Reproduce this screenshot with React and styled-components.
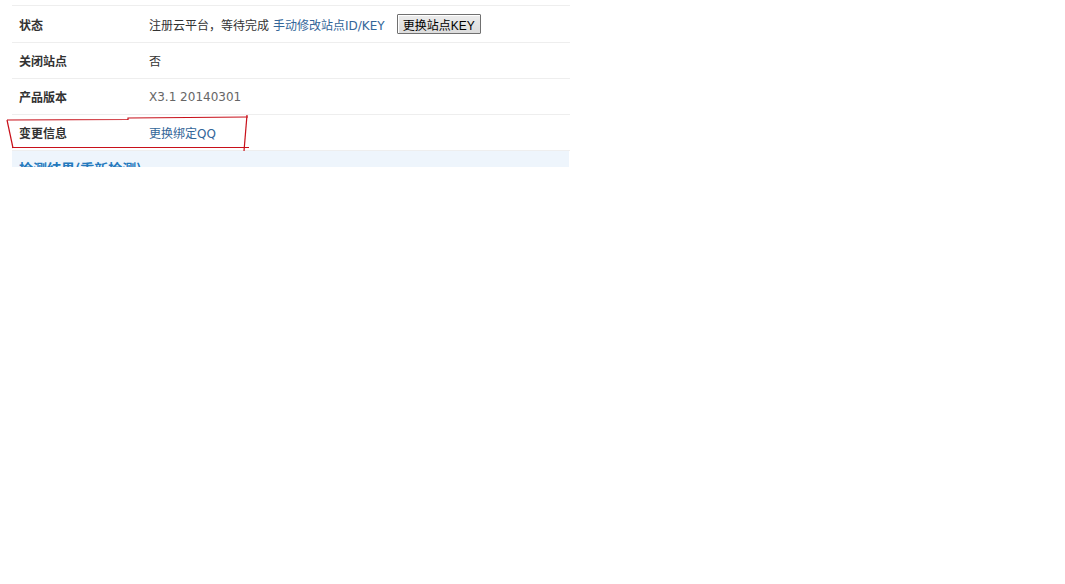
import React from "react";
import styled, { createGlobalStyle } from "styled-components";

const GlobalStyle = createGlobalStyle`
  html, body {
    margin: 0;
    padding: 0;
    background: #fff;
  }
  body {
    font-family: "DejaVu Sans", "Noto Sans CJK SC", sans-serif;
    font-size: 12px;
    color: #333;
  }
`;

const Viewport = styled.div`
  position: relative;
  height: 167px;
  overflow: hidden;
  padding: 5px 0 0 12px;
  box-sizing: border-box;
`;

const Table = styled.div`
  width: 558px;
  border-top: 1px solid #eeeeee;
`;

const Row = styled.div`
  display: grid;
  grid-template-columns: 130px 1fr;
  align-items: center;
  height: ${(p) => (p.$first ? "36px" : "35px")};
  border-bottom: 1px solid #eeeeee;
`;

const Label = styled.div`
  padding-left: 7px;
  font-family: "Noto Sans CJK SC", sans-serif;
  font-weight: bold;
  color: #333;
`;

const Value = styled.div`
  padding-left: 7px;
  display: flex;
  align-items: center;
  color: ${(p) => (p.$muted ? "#666" : "#333")};
`;

const Link = styled.a`
  color: #336699;
  text-decoration: none;
  margin-left: ${(p) => (p.$gap ? "4px" : "0")};
`;

const Button = styled.button`
  margin-left: 12px;
  height: 20px;
  padding: 0 5px;
  font-family: "Liberation Sans", "Noto Sans CJK SC", sans-serif;
  font-size: 12px;
  color: #000;
  background: linear-gradient(#ececec, #dcdcdc);
  border: 1px solid #707070;
  border-radius: 1px;
  box-shadow: inset 1px 1px 0 #fff;
`;

const Header = styled.div`
  height: 36px;
  background: #eef5fc;
  padding: 7px 0 0 7px;
  box-sizing: border-box;
  font-family: "Noto Sans CJK SC", sans-serif;
  font-size: 14px;
  font-weight: bold;
  color: #2479bd;
  width: 557px;
`;

const Mark = styled.svg`
  position: absolute;
  left: 0;
  top: 0;
  pointer-events: none;
`;

export default function App() {
  return (
    <>
      <GlobalStyle />
      <Viewport>
        <Table>
          <Row $first>
            <Label>状态</Label>
            <Value>
              注册云平台，等待完成
              <Link $gap href="#">手动修改站点ID/KEY</Link>
              <Button>更换站点KEY</Button>
            </Value>
          </Row>
          <Row>
            <Label>关闭站点</Label>
            <Value>否</Value>
          </Row>
          <Row>
            <Label>产品版本</Label>
            <Value $muted>X3.1 20140301</Value>
          </Row>
          <Row>
            <Label>变更信息</Label>
            <Value>
              <Link href="#">更换绑定QQ</Link>
            </Value>
          </Row>
          <Header>检测结果(重新检测)</Header>
        </Table>
        <Mark width="260" height="160">
          <g stroke="#c8101a" strokeWidth="1.2" fill="none">
            <polyline points="7,120 128,119.5 128,118 248,117" />
            <line x1="7" y1="120" x2="13" y2="148" />
            <line x1="12" y1="147.5" x2="249" y2="147.5" />
            <line x1="247" y1="115" x2="244" y2="151" />
          </g>
        </Mark>
      </Viewport>
    </>
  );
}
